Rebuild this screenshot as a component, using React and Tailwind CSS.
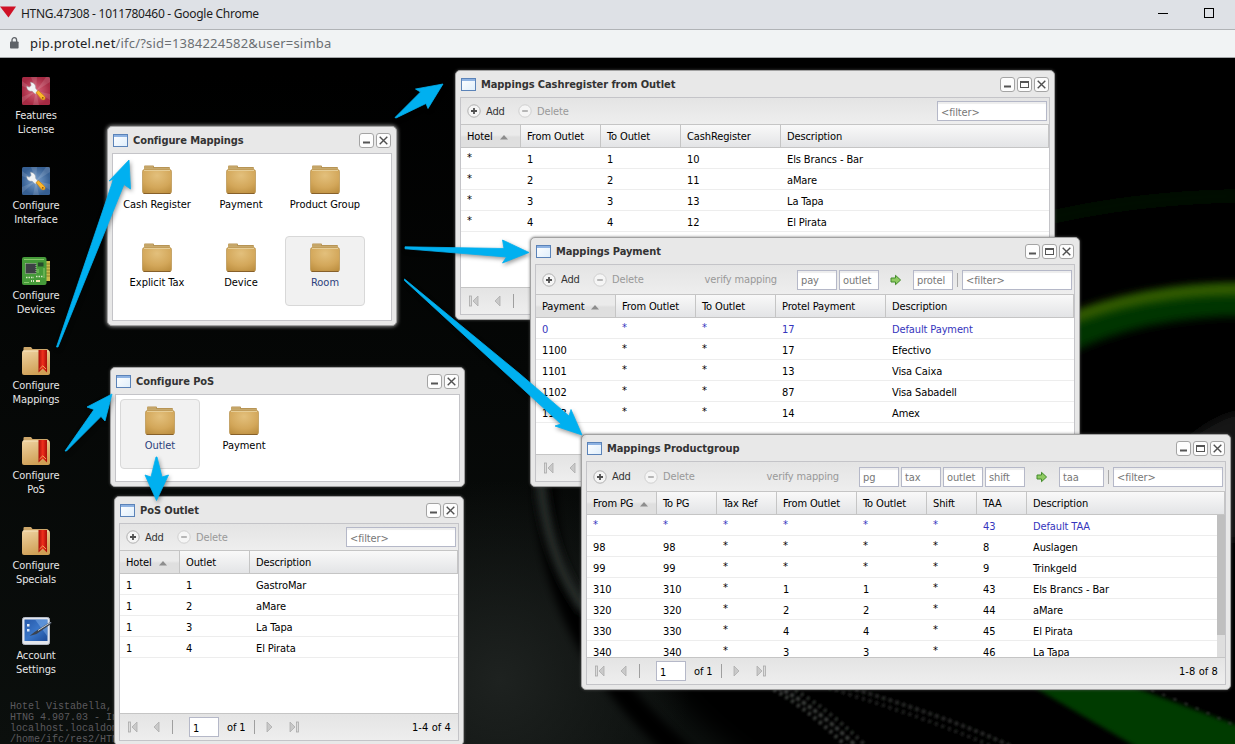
import React from "react";

const UI = "font-['DejaVu_Sans_Condensed','DejaVu_Sans','Noto_Sans',sans-serif] text-[11px] tracking-[-0.12px]";

function WindowIcon() {
  return (
    <svg width="16" height="16" viewBox="0 0 16 16" className="shrink-0">
      <defs>
        <linearGradient id="wi" x1="0" y1="0" x2="1" y2="1">
          <stop offset="0" stopColor="#ffffff" />
          <stop offset="1" stopColor="#dfeefb" />
        </linearGradient>
      </defs>
      <rect x="0.5" y="2.5" width="14" height="12" fill="url(#wi)" stroke="#5b83b8" />
      <rect x="1" y="3" width="13" height="2" fill="#8db2e2" />
    </svg>
  );
}

function Tool({ kind }) {
  return (
    <svg width="15" height="15" viewBox="0 0 15 15">
      <rect x="0.5" y="0.5" width="14" height="14" rx="2.5" fill="#fdfdfd" stroke="#a4a4a4" />
      {kind === "min" && <path d="M4 9.5h7" stroke="#555" strokeWidth="2" />}
      {kind === "max" && (
        <g fill="none" stroke="#555">
          <rect x="3.5" y="4.5" width="8" height="6" />
          <path d="M3 5h9" strokeWidth="2" />
        </g>
      )}
      {kind === "close" && <path d="M3.7 3.7l7.6 7.6M11.3 3.7l-7.6 7.6" stroke="#505050" strokeWidth="1.4" />}
    </svg>
  );
}

function Win({ pos, title, max, glow, children }) {
  return (
    <section
      className={`absolute ${pos} flex flex-col rounded-[5px] border border-[#a2a2a2] bg-[#e8e8e8] px-1 pb-1 ${
        glow ? "shadow-[0_0_4px_rgba(255,255,255,0.75)]" : "shadow-[0_0_3px_rgba(90,90,90,0.8)]"
      }`}
    >
      <header className="flex h-[26px] shrink-0 items-center pl-px pr-0">
        <WindowIcon />
        <h2 className="ml-[4px] flex-1 whitespace-nowrap pt-px text-[11px] font-bold leading-[14px] tracking-[-0.08px] text-[#333]">
          {title}
        </h2>
        <div className="mr-px flex gap-[2px]">
          <Tool kind="min" />
          {max && <Tool kind="max" />}
          <Tool kind="close" />
        </div>
      </header>
      <div className="flex min-h-0 flex-1 flex-col border border-[#c4c4c8] bg-white">{children}</div>
    </section>
  );
}

function RoundIcon({ plus }) {
  return (
    <svg width="14" height="14" viewBox="0 0 14 14" className="shrink-0">
      <circle cx="7" cy="7" r="6.2" fill="#f5f5f5" stroke={plus ? "#b0b0b0" : "#d0d0d0"} />
      <path d={plus ? "M4 7h6M7 4v6" : "M4.2 7h5.6"} stroke={plus ? "#505050" : "#a0a0a0"} strokeWidth={plus ? 1.8 : 1.5} />
    </svg>
  );
}

function Field({ w, children }) {
  return (
    <div
      className={`flex h-5 shrink-0 items-center border border-[#b5b8c8] bg-white pl-[3px] pt-[3px] text-[#777] shadow-[inset_0_2px_1px_#ededed] ${w}`}
    >
      {children}
    </div>
  );
}

function GreenArrow() {
  return (
    <svg width="12" height="12" viewBox="0 0 12 12" className="shrink-0">
      <path d="M1 4h4.5V1.3L10.6 6l-5.1 4.7V8H1z" fill="#8fca62" stroke="#438c2b" strokeLinejoin="round" />
    </svg>
  );
}

function Toolbar({ h, children }) {
  return (
    <div className={`flex shrink-0 items-center bg-gradient-to-b from-[#e4e4e4] to-[#eeeeee] pl-[6px] pr-[2px] ${h}`}>
      <RoundIcon plus />
      <span className="ml-[5px] w-[32px] pt-px text-[#333]">Add</span>
      <RoundIcon />
      <span className="ml-[5px] pt-px text-[#999]">Delete</span>
      <div className="flex flex-1 items-center justify-end">{children}</div>
    </div>
  );
}

function Verify() {
  return <span className="mr-[20px] pt-px tracking-[-0.16px] text-[#999]">verify mapping</span>;
}

function Sep() {
  return <i className="ml-[4px] mr-[4px] h-[14px] w-px bg-[#a9a9a9]" />;
}

function Grid({ cols, rows, scroll }) {
  return (
    <div className="flex min-h-0 flex-1 flex-col">
      <div className="flex h-6 shrink-0 border-y border-[#c5c5c5] bg-gradient-to-b from-[#f9f9f9] to-[#e3e4e6] text-black">
        {cols.map(([name, w], i) => (
          <div
            key={name}
            className={`flex items-center border-r border-[#c5c5c5] pl-[6px] ${w} ${
              i === 0 ? "bg-gradient-to-b from-[#ebebeb] from-45% to-[#dfdfdf] to-55%" : ""
            }`}
          >
            <span className="whitespace-nowrap pt-px">{name}</span>
            {i === 0 && (
              <svg width="8" height="5" viewBox="0 0 8 5" className="ml-[7px] mt-[3px]">
                <path d="M0 4.5L4 0l4 4.5z" fill="#8d8d8d" />
              </svg>
            )}
          </div>
        ))}
      </div>
      <div className="flex min-h-0 flex-1 overflow-hidden">
        <div className="min-w-0 flex-1">
          {rows.map((r, n) => (
            <div
              key={n}
              className={`flex h-[21px] items-center border-b border-[#ededed] ${r.blue ? "text-[#3535bd]" : "text-black"}`}
            >
              {r.cells.map((c, i) => (
                <div key={i} className={`whitespace-nowrap pl-[6px] ${c === "*" ? "" : "pt-[3px]"} ${cols[i][1]}`}>
                  {c}
                </div>
              ))}
            </div>
          ))}
        </div>
        {scroll && (
          <div className="w-2 shrink-0 bg-[#dedede]">
            <div className="h-[120px] bg-[#bfbfbf]" />
          </div>
        )}
      </div>
    </div>
  );
}

function PageIcon({ flip, bar, cls }) {
  return (
    <svg width="12" height="12" viewBox="0 0 12 12" className={`shrink-0 ${flip ? "-scale-x-100" : ""} ${cls}`}>
      {bar && <rect x="1.5" y="1" width="2" height="10" fill="#dcdcdc" stroke="#a8a8a8" strokeWidth="0.8" />}
      <path d="M10 1v10L5 6z" fill="#c9c9c9" stroke="#adadad" strokeWidth="0.8" />
    </svg>
  );
}

function Pager({ text }) {
  return (
    <div className="flex h-[27px] shrink-0 items-center border-t border-[#c5c5c5] bg-gradient-to-b from-[#e4e4e4] to-[#eeeeee] pr-[7px] text-black">
      <PageIcon bar cls="ml-[7px]" />
      <PageIcon cls="ml-[10px]" />
      <i className="ml-[11px] h-[14px] w-px bg-[#9f9f9f]" />
      {text && (
        <>
          <div className="ml-[16px] flex h-5 w-[30px] items-center border border-[#b5b8c8] bg-white pl-[3px] pt-[3px]">1</div>
          <span className="ml-[8px] w-[27px] whitespace-nowrap pt-px">of 1</span>
          <i className="h-[14px] w-px bg-[#9f9f9f]" />
          <PageIcon flip cls="ml-[10px]" />
          <PageIcon flip bar cls="ml-[11px]" />
          <span className="flex-1 pt-px text-right tracking-[0.1px]">{text}</span>
        </>
      )}
    </div>
  );
}

function Folder() {
  return (
    <svg width="32" height="32" viewBox="0 0 32 32">
      <defs>
        <radialGradient id="fg" cx="0.5" cy="0.25" r="0.85">
          <stop offset="0" stopColor="#e3c07c" />
          <stop offset="0.6" stopColor="#d3a75a" />
          <stop offset="1" stopColor="#bb8d3e" />
        </radialGradient>
      </defs>
      <path d="M3 8V3.5q0-1 1-1h8q1 0 1 1V4h15q1 0 1 1v4H2.500z" fill="#b79454" />
      <path d="M3 6.200h26" stroke="#ecd7a6" />
      <path d="M3 4h9" stroke="#d2b57b" />
      <rect x="1.500" y="6.500" width="29" height="24" rx="2" fill="url(#fg)" stroke="#b8924f" strokeWidth="0.700" />
      <path d="M3 7.500h26" stroke="#e6cd96" />
      <path d="M2.500 30.500h27" stroke="#87602a" />
    </svg>
  );
}

function Tile({ label, on }) {
  return (
    <div
      className={`flex h-[70px] w-20 flex-col items-center rounded border pt-[4px] ${
        on ? "border-[#d8d8d8] bg-[#f1f1f1] text-[#2c3f7c]" : "border-transparent text-black"
      }`}
    >
      <Folder />
      <span className="mt-[3px] whitespace-nowrap leading-[14px] tracking-[-0.04px]">{label}</span>
    </div>
  );
}

function Wrench({ a, b, id }) {
  return (
    <svg width="28" height="28" viewBox="0 0 28 28">
      <defs>
        <radialGradient id={id}>
          <stop offset="0" stopColor={b} />
          <stop offset="1" stopColor={a} />
        </radialGradient>
      </defs>
      <rect width="28" height="28" rx="1.500" fill={`url(#${id})`} />
      <path d="M14 14L0 4V9zM14 14L9 0h6zM14 14L28 5V0h-4zM14 14L28 17v6zM14 14L17 28h-6zM14 14L0 20v6z" fill="#fff" opacity="0.13" />
      <path d="M8.500 5.200l.7 3.300-2 1.700L4.800 9.300c-.2 3 2 5.400 5.300 4.800l3.200 3 2.700-2.700-2.600-3.300c.5-3-1.500-5.600-4.900-5.900z" fill="#f2f4f5" stroke="#a3a8ac" strokeWidth="0.500" />
      <path d="M14 15.500l2.300-2 5.600 5.100q2.200 2.300.7 3.800-1.500 1.300-3.700-.7z" fill="#fbb62b" stroke="#bf7c10" strokeWidth="0.600" />
      <circle cx="20.800" cy="20.800" r="0.900" fill="#8a5408" />
    </svg>
  );
}

function Board() {
  return (
    <svg width="28" height="28" viewBox="0 0 28 28">
      <rect x="22" y="4" width="6" height="20" fill="#c9b94c" />
      <path d="M24 7h4M24 10h4M24 13h4M24 16h4M24 19h4" stroke="#8c7e25" />
      <rect width="24.500" height="28" rx="2" fill="#459a39" />
      <path d="M2 2.500h20M2 25.500h5M16 12v4M22 11v10" stroke="#86c86b" />
      <rect x="3.500" y="6.500" width="10.500" height="10" fill="#3c4044" stroke="#aeb9a6" strokeDasharray="1 1" />
      <rect x="16" y="5.500" width="5.500" height="4" fill="#274c2c" />
      <rect x="14" y="23" width="4" height="2" fill="#f3e6b2" />
      <path d="M4 20.500h8M14 19.500h7" stroke="#d6e6c4" strokeWidth="1.500" strokeDasharray="1.500 1" />
      <path d="M9 24h4" stroke="#d6e6c4" strokeWidth="2" strokeDasharray="1 1" />
    </svg>
  );
}

function BookmarkFolder() {
  return (
    <svg width="28" height="28" viewBox="0 0 28 28">
      <defs>
        <linearGradient id="bf" x1="0" y1="0" x2="0.400" y2="1">
          <stop offset="0" stopColor="#efd3a2" />
          <stop offset="1" stopColor="#cf9f55" />
        </linearGradient>
        <linearGradient id="rb" x1="0" x2="1">
          <stop offset="0" stopColor="#a80d08" />
          <stop offset="0.500" stopColor="#f0301c" />
          <stop offset="1" stopColor="#a80d08" />
        </linearGradient>
      </defs>
      <path d="M1.500 5V1q0-1 1-1H9l1.500 2H25q1.500 0 1.500 1.500V6z" fill="#cda76a" />
      <rect y="3.500" width="28" height="24.500" rx="2" fill="url(#bf)" />
      <path d="M1 4h26" stroke="#f7e4bf" />
      <path d="M16.500 3h8.500v22.500l-4.200-4-4.300 4z" fill="url(#rb)" />
      <path d="M17.500 22l3.300-3.200L24 22" stroke="#f6c06b" fill="none" strokeWidth="0.800" />
    </svg>
  );
}

function Tablet() {
  return (
    <svg width="30" height="28" viewBox="0 0 30 28" className="ml-[2px]">
      <defs>
        <linearGradient id="tb" x1="0" y1="0" x2="1" y2="1">
          <stop offset="0" stopColor="#2658a8" />
          <stop offset="0.500" stopColor="#3a76c8" />
          <stop offset="1" stopColor="#1c4b98" />
        </linearGradient>
      </defs>
      <rect x="0.500" y="0.500" width="27" height="27" rx="2" fill="#e3e6ec" stroke="#b4bac6" />
      <rect x="2.500" y="2.500" width="23" height="21.500" fill="url(#tb)" />
      <path d="M13 2.500h12.500v17z" fill="#7fb0ea" opacity="0.500" />
      <path d="M5 7h2.500v2.500H5zM5 12h2.500v2.500H5z" fill="#dfe9f8" />
      <path d="M7.500 19l5-4L28 5l1.800.3-.8 1.800-14.500 9.800z" fill="#3b4350" />
      <path d="M16 13.500L28.500 5.500" stroke="#c5ccd5" />
    </svg>
  );
}

const shortcuts = [
  [<Wrench a="#a52a43" b="#d9667c" id="wr" />, "Features", "License"],
  [<Wrench a="#365f92" b="#7ba1cd" id="wb" />, "Configure", "Interface"],
  [<Board />, "Configure", "Devices"],
  [<BookmarkFolder />, "Configure", "Mappings"],
  [<BookmarkFolder />, "Configure", "PoS"],
  [<BookmarkFolder />, "Configure", "Specials"],
  [<Tablet />, "Account", "Settings"],
];

function Wallpaper() {
  return (
    <svg className="absolute inset-0" width="1235" height="744" viewBox="0 0 1235 744">
      <defs>
        <linearGradient id="bgv" x1="0" y1="0" x2="0" y2="1">
          <stop offset="0.100" stopColor="#000000" />
          <stop offset="0.500" stopColor="#050706" />
          <stop offset="1" stopColor="#0b0f0d" />
        </linearGradient>
        <radialGradient id="glow">
          <stop offset="0" stopColor="#1e2220" />
          <stop offset="1" stopColor="#1e2220" stopOpacity="0" />
        </radialGradient>
        <filter id="b4" x="-20%" y="-50%" width="140%" height="200%"><feGaussianBlur stdDeviation="4" /></filter>
        <filter id="b2"><feGaussianBlur stdDeviation="2" /></filter>
        <filter id="b1"><feGaussianBlur stdDeviation="0.8" /></filter>
        <filter id="b12"><feGaussianBlur stdDeviation="12" /></filter>
      </defs>
      <rect width="1235" height="744" fill="url(#bgv)" />
      <path d="M700 0H1260V770H760Q640 690 600 560z" fill="#000" filter="url(#b12)" />
      <ellipse cx="500" cy="680" rx="190" ry="200" fill="url(#glow)" />
      <path d="M545 480Q545 640 690 760" fill="none" stroke="#020302" strokeWidth="22" filter="url(#b4)" />
      <path d="M540 480Q548 560 585 610" fill="none" stroke="#2b302e" strokeWidth="10" filter="url(#b4)" />
      <path d="M1040 220Q1130 198 1235 196" fill="none" stroke="#040a05" strokeWidth="14" filter="url(#b4)" />
      <path d="M1060 340Q1140 300 1245 300" fill="none" stroke="#023602" strokeWidth="32" filter="url(#b4)" />
      <path d="M1060 323Q1140 289 1245 289" fill="none" stroke="#396106" strokeWidth="11" filter="url(#b4)" />
      <path d="M1175 450Q1210 418 1240 412V540H1215z" fill="#131715" filter="url(#b4)" />
      <path d="M1228 628H1240" stroke="#183b08" strokeWidth="8" filter="url(#b2)" />
      <path d="M1025 682H1120L1245 728V755H1150z" fill="#043a02" filter="url(#b2)" />
      <g fill="none" filter="url(#b1)">
        <path d="M755 680Q800 700 850 750" stroke="#3d403e" strokeWidth="4" strokeDasharray="3 4" />
        <path d="M762 680Q807 698 858 748" stroke="#3a3d3b" strokeWidth="4" strokeDasharray="4 3" strokeDashoffset="3" />
        <path d="M770 678Q815 696 866 746" stroke="#2b2e2c" strokeWidth="4" strokeDasharray="3 4" />
        <path d="M815 684Q930 718 1000 750" stroke="#202320" strokeWidth="4" strokeDasharray="3 4" />
        <path d="M830 682Q945 715 1015 748" stroke="#252825" strokeWidth="4" strokeDasharray="4 3" strokeDashoffset="2" />
      </g>
      <path d="M1140 686Q1190 704 1240 728" fill="none" stroke="#393c39" strokeWidth="2" strokeDasharray="3 9" filter="url(#b1)" />
    </svg>
  );
}

function Arrows() {
  return (
    <svg className="pointer-events-none absolute inset-0 drop-shadow-[1px_2px_2px_rgba(0,0,0,0.4)]" width="1235" height="744" viewBox="0 0 1235 744">
      <g fill="#00b0f0" stroke="#00b0f0" strokeWidth="0.800" strokeLinejoin="round">
        <path d="M395 117.500L420.500 92 415.500 89 443 84 428 108.500 426 103.500 396 118z" />
        <path d="M405 246.800L504 248.500 502.500 240 529 252.500 502.500 263 506.500 257 405 248.800z" />
        <path d="M404.500 279L520 374 569 416 571 409.500 582 435 555 426 561 424 404.500 280.500z" />
        <path d="M56.500 347L113.500 179 109 181 129 160 130.500 189 124 184.500 58 347z" />
        <path d="M65 451L94 409.500 87 407 112 394 105 421 101 416.500 66.500 451z" />
        <path d="M156 457L151 477 145 475 156.500 500.500 168.500 475 162 477 157 457z" />
      </g>
    </svg>
  );
}

const row = (...cells) => ({ cells });
const blue = (...cells) => ({ cells, blue: true });

export default function App() {
  return (
    <main className={`relative h-[744px] w-[1235px] overflow-hidden bg-black leading-[14px] ${UI}`}>
      <Wallpaper />
      <div className="relative font-['Noto_Sans',sans-serif] tracking-normal">
        <div className="flex h-[30px] items-center border-b border-[#b0b3b6] bg-[#dee1e6]">
          <svg width="16" height="12" viewBox="0 0 16 12" className="-mt-[5px]">
            <path d="M0 0.500H16L8.500 11.500z" fill="#cf1126" />
          </svg>
          <h1 className="ml-[5px] flex-1 pb-px text-[12px] leading-4 tracking-[-0.27px] text-[#1c1c1c]">
            HTNG.47308 - 1011780460 - Google Chrome
          </h1>
          <svg width="56" height="12" viewBox="0 0 56 12" className="mb-[3px] mr-[21px]" fill="none" stroke="#000">
            <path d="M0 6.500h10" />
            <rect x="46.500" y="1.500" width="9" height="9" />
          </svg>
        </div>
        <div className="flex h-7 items-center border-b border-[#a4a7a9] bg-[#f1f3f4]">
          <svg width="9" height="12" viewBox="0 0 9 12" className="ml-[10px] mb-px">
            <rect y="4.500" width="8.600" height="7" rx="0.800" fill="#5f6368" />
            <path d="M2 5V3a2.300 2.300 0 014.600 0v2" fill="none" stroke="#5f6368" strokeWidth="1.300" />
          </svg>
          <p className="ml-[11px] pb-px text-[13px] leading-4 tracking-[0.2px] text-[#6b6f73]">
            <span className="text-[#202124]">pip.protel.net</span>/ifc/?sid=1384224582&amp;user=simba
          </p>
        </div>
      </div>

      <nav className="relative flex w-[72px] flex-col pt-[19px]">
        {shortcuts.map(([icon, a, b], i) => (
          <div key={i} className="flex h-[90px] flex-col items-center text-center leading-[14px] tracking-[-0.1px] text-[#e6e6e6]">
            <div className="flex h-8">{icon}</div>
            <span>{a}</span>
            <span>{b}</span>
          </div>
        ))}
      </nav>
      <pre className="absolute left-[10px] top-[701px] font-['Liberation_Mono',monospace] text-[10px] leading-[11px] tracking-normal text-[#5c5a5e]">
        {"Hotel Vistabella,\nHTNG 4.907.03 - In\nlocalhost.localdom\n/home/ifc/res2/HTN"}
      </pre>

      <Win pos="left-[107px] top-[126px] h-[200px] w-[290px]" title="Configure Mappings" glow>
        <div className="grid grid-cols-[repeat(3,80px)] gap-x-1 gap-y-2 p-1">
          <Tile label="Cash Register" />
          <Tile label="Payment" />
          <Tile label="Product Group" />
          <Tile label="Explicit Tax" />
          <Tile label="Device" />
          <Tile label="Room" on />
        </div>
      </Win>

      <Win pos="left-[110px] top-[367px] h-[120px] w-[355px]" title="Configure PoS">
        <div className="flex gap-1 p-1">
          <Tile label="Outlet" on />
          <Tile label="Payment" />
        </div>
      </Win>

      <Win pos="left-[114px] top-[496px] h-[250px] w-[350px]" title="PoS Outlet">
        <Toolbar h="h-[26px]">
          <Field w="w-[110px]">&lt;filter&gt;</Field>
        </Toolbar>
        <Grid
          cols={[["Hotel", "w-[60px]"], ["Outlet", "w-[70px]"], ["Description", "flex-1"]]}
          rows={[row("1", "1", "GastroMar"), row("1", "2", "aMare"), row("1", "3", "La Tapa"), row("1", "4", "El Pirata")]}
        />
        <Pager text="1-4 of 4" />
      </Win>

      <Win pos="left-[455px] top-[70px] h-[250px] w-[600px]" title="Mappings Cashregister from Outlet" max>
        <Toolbar h="h-[26px]">
          <Field w="w-[110px]">&lt;filter&gt;</Field>
        </Toolbar>
        <Grid
          cols={[["Hotel", "w-[60px]"], ["From Outlet", "w-[80px]"], ["To Outlet", "w-[80px]"], ["CashRegister", "w-[100px]"], ["Description", "flex-1"]]}
          rows={[
            row("*", "1", "1", "10", "Els Brancs - Bar"),
            row("*", "2", "2", "11", "aMare"),
            row("*", "3", "3", "13", "La Tapa"),
            row("*", "4", "4", "12", "El Pirata"),
          ]}
        />
        <Pager />
      </Win>

      <Win pos="left-[530px] top-[237px] h-[250px] w-[550px]" title="Mappings Payment" max>
        <Toolbar h="h-[29px]">
          <Verify />
          <div className="flex gap-[2px]">
            <Field w="w-10">pay</Field>
            <Field w="w-10">outlet</Field>
          </div>
          <span className="mx-[11px] flex"><GreenArrow /></span>
          <Field w="w-10">protel</Field>
          <Sep />
          <Field w="w-[110px]">&lt;filter&gt;</Field>
        </Toolbar>
        <Grid
          cols={[["Payment", "w-[80px]"], ["From Outlet", "w-[80px]"], ["To Outlet", "w-[80px]"], ["Protel Payment", "w-[110px]"], ["Description", "flex-1"]]}
          rows={[
            blue("0", "*", "*", "17", "Default Payment"),
            row("1100", "*", "*", "17", "Efectivo"),
            row("1101", "*", "*", "13", "Visa Caixa"),
            row("1102", "*", "*", "87", "Visa Sabadell"),
            row("1103", "*", "*", "14", "Amex"),
          ]}
        />
        <Pager />
      </Win>

      <Win pos="left-[581px] top-[434px] h-[256px] w-[650px]" title="Mappings Productgroup" max>
        <Toolbar h="h-[29px]">
          <Verify />
          <div className="flex gap-[2px]">
            <Field w="w-10">pg</Field>
            <Field w="w-10">tax</Field>
            <Field w="w-10">outlet</Field>
            <Field w="w-10">shift</Field>
          </div>
          <span className="mx-[11px] flex"><GreenArrow /></span>
          <Field w="w-[45px]">taa</Field>
          <Sep />
          <Field w="w-[110px]">&lt;filter&gt;</Field>
        </Toolbar>
        <Grid
          scroll
          cols={[
            ["From PG", "w-[70px]"],
            ["To PG", "w-[60px]"],
            ["Tax Ref", "w-[60px]"],
            ["From Outlet", "w-[80px]"],
            ["To Outlet", "w-[70px]"],
            ["Shift", "w-[50px]"],
            ["TAA", "w-[50px]"],
            ["Description", "flex-1"],
          ]}
          rows={[
            blue("*", "*", "*", "*", "*", "*", "43", "Default TAA"),
            row("98", "98", "*", "*", "*", "*", "8", "Auslagen"),
            row("99", "99", "*", "*", "*", "*", "9", "Trinkgeld"),
            row("310", "310", "*", "1", "1", "*", "43", "Els Brancs - Bar"),
            row("320", "320", "*", "2", "2", "*", "44", "aMare"),
            row("330", "330", "*", "4", "4", "*", "45", "El Pirata"),
            row("340", "340", "*", "3", "3", "*", "46", "La Tapa"),
          ]}
        />
        <Pager text="1-8 of 8" />
      </Win>

      <Arrows />
    </main>
  );
}
